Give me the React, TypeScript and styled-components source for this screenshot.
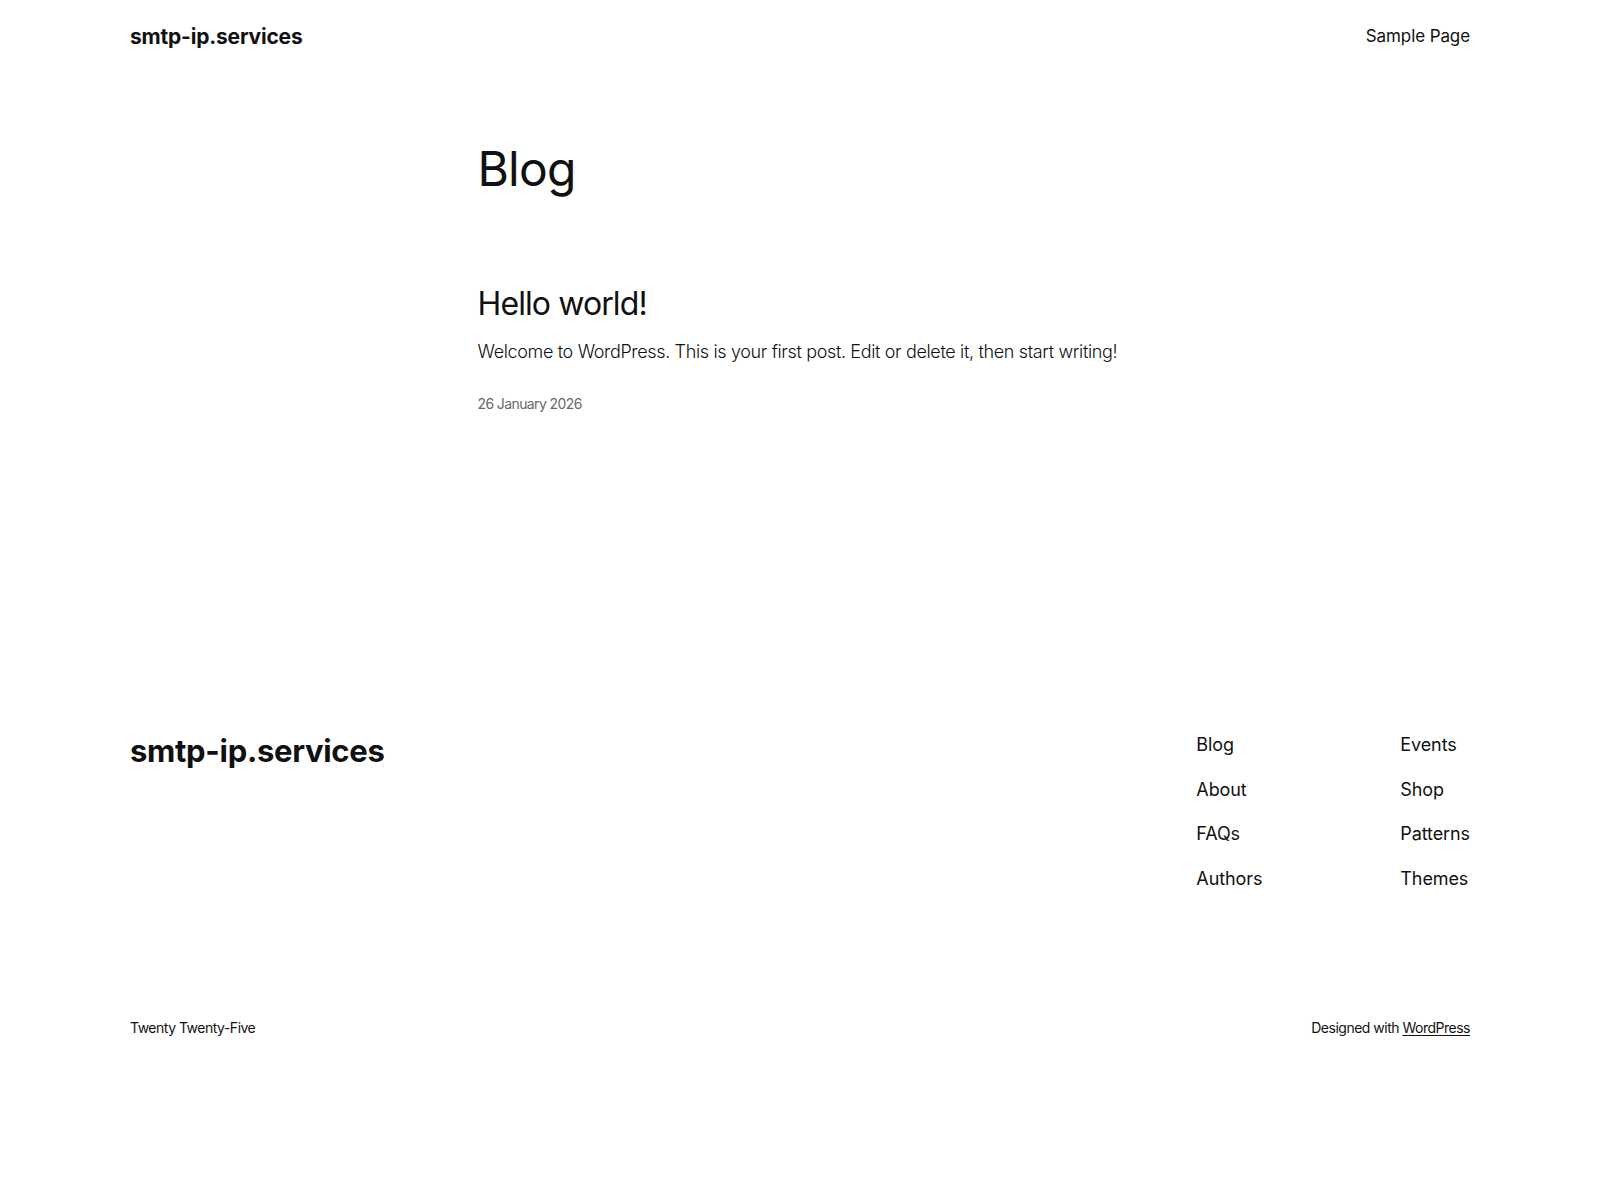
import React from 'react'
import styled, { createGlobalStyle } from 'styled-components'

const GlobalStyle = createGlobalStyle`
  html, body {
    margin: 0;
    padding: 0;
    background: #ffffff;
  }
  body {
    font-family: Inter, 'Liberation Sans', sans-serif;
    color: #111111;
    letter-spacing: -0.1px;
    -webkit-font-smoothing: antialiased;
  }
  a {
    color: inherit;
    text-decoration: none;
  }
`

/**
 * Layout wrappers
 */
const Wide = styled.div`
  width: 1340px;
  margin: 0 auto;
`

const Header = styled(Wide)`
  display: flex;
  justify-content: space-between;
  align-items: center;
  padding: 22px 0 20px;
  line-height: 1.4;
`

const SiteTitle = styled.a<{ $big?: boolean }>`
  font-weight: 700;
  font-size: ${(p) => (p.$big ? '31px' : '21px')};
  letter-spacing: ${(p) => (p.$big ? '-0.3px' : '-0.2px')};
  line-height: 1.4;
`

const NavLink = styled.a<{ $small?: boolean }>`
  font-size: ${(p) => (p.$small ? '17px' : '18px')};
  line-height: 1.4;
`

const Main = styled.main`
  width: 645px;
  margin: 0 auto;
`

const PageTitle = styled.h1`
  margin: 71px 0 0;
  font-size: 48px;
  font-weight: 400;
  line-height: 1.125;
  letter-spacing: -0.8px;
`

const Post = styled.article`
  margin-top: 90px;
`

const PostTitle = styled.h2`
  margin: 0;
  font-size: 32px;
  font-weight: 400;
  line-height: 1.125;
  letter-spacing: -0.9px;
`

const Excerpt = styled.p`
  margin: 17px 0 0;
  font-size: 18px;
  line-height: 1.4;
  font-weight: 300;
  letter-spacing: -0.35px;
  white-space: nowrap;
`

const PostDate = styled.time`
  display: block;
  margin-top: 29px;
  font-size: 14px;
  line-height: 1.4;
  letter-spacing: -0.6px;
  color: #686868;
`

const Footer = styled(Wide)`
  margin-top: 316px;
  padding-bottom: 150px;
`

const FooterTop = styled.div`
  display: flex;
  justify-content: space-between;
  align-items: flex-start;
`

const FooterNav = styled.nav`
  display: grid;
  grid-template-columns: 204px auto;
  padding-top: 3px;
`

const FooterColumn = styled.div`
  display: flex;
  flex-direction: column;
  gap: 19.4px;
`

const FooterBottom = styled.div`
  display: flex;
  justify-content: space-between;
  margin-top: 127px;
  font-size: 14px;
  line-height: 1.4;
  letter-spacing: -0.5px;
`

const Credit = styled.span`
  a {
    text-decoration: underline;
    text-underline-offset: 2px;
  }
`

const firstColumn = ['Blog', 'About', 'FAQs', 'Authors']
const secondColumn = ['Events', 'Shop', 'Patterns', 'Themes']

export default function App() {
  return (
    <>
      <GlobalStyle />
      <Header as="header">
        <SiteTitle href="#">smtp-ip.services</SiteTitle>
        <NavLink $small href="#">
          Sample Page
        </NavLink>
      </Header>

      <Main>
        <PageTitle>Blog</PageTitle>
        <Post>
          <PostTitle>Hello world!</PostTitle>
          <Excerpt>
            Welcome to WordPress. This is your first post. Edit or delete it, then start writing!
          </Excerpt>
          <PostDate>26 January 2026</PostDate>
        </Post>
      </Main>

      <Footer as="footer">
        <FooterTop>
          <SiteTitle $big href="#">
            smtp-ip.services
          </SiteTitle>
          <FooterNav>
            <FooterColumn>
              {firstColumn.map((item) => (
                <NavLink key={item} href="#">
                  {item}
                </NavLink>
              ))}
            </FooterColumn>
            <FooterColumn>
              {secondColumn.map((item) => (
                <NavLink key={item} href="#">
                  {item}
                </NavLink>
              ))}
            </FooterColumn>
          </FooterNav>
        </FooterTop>
        <FooterBottom>
          <span>Twenty Twenty-Five</span>
          <Credit>
            Designed with <a href="#">WordPress</a>
          </Credit>
        </FooterBottom>
      </Footer>
    </>
  )
}
